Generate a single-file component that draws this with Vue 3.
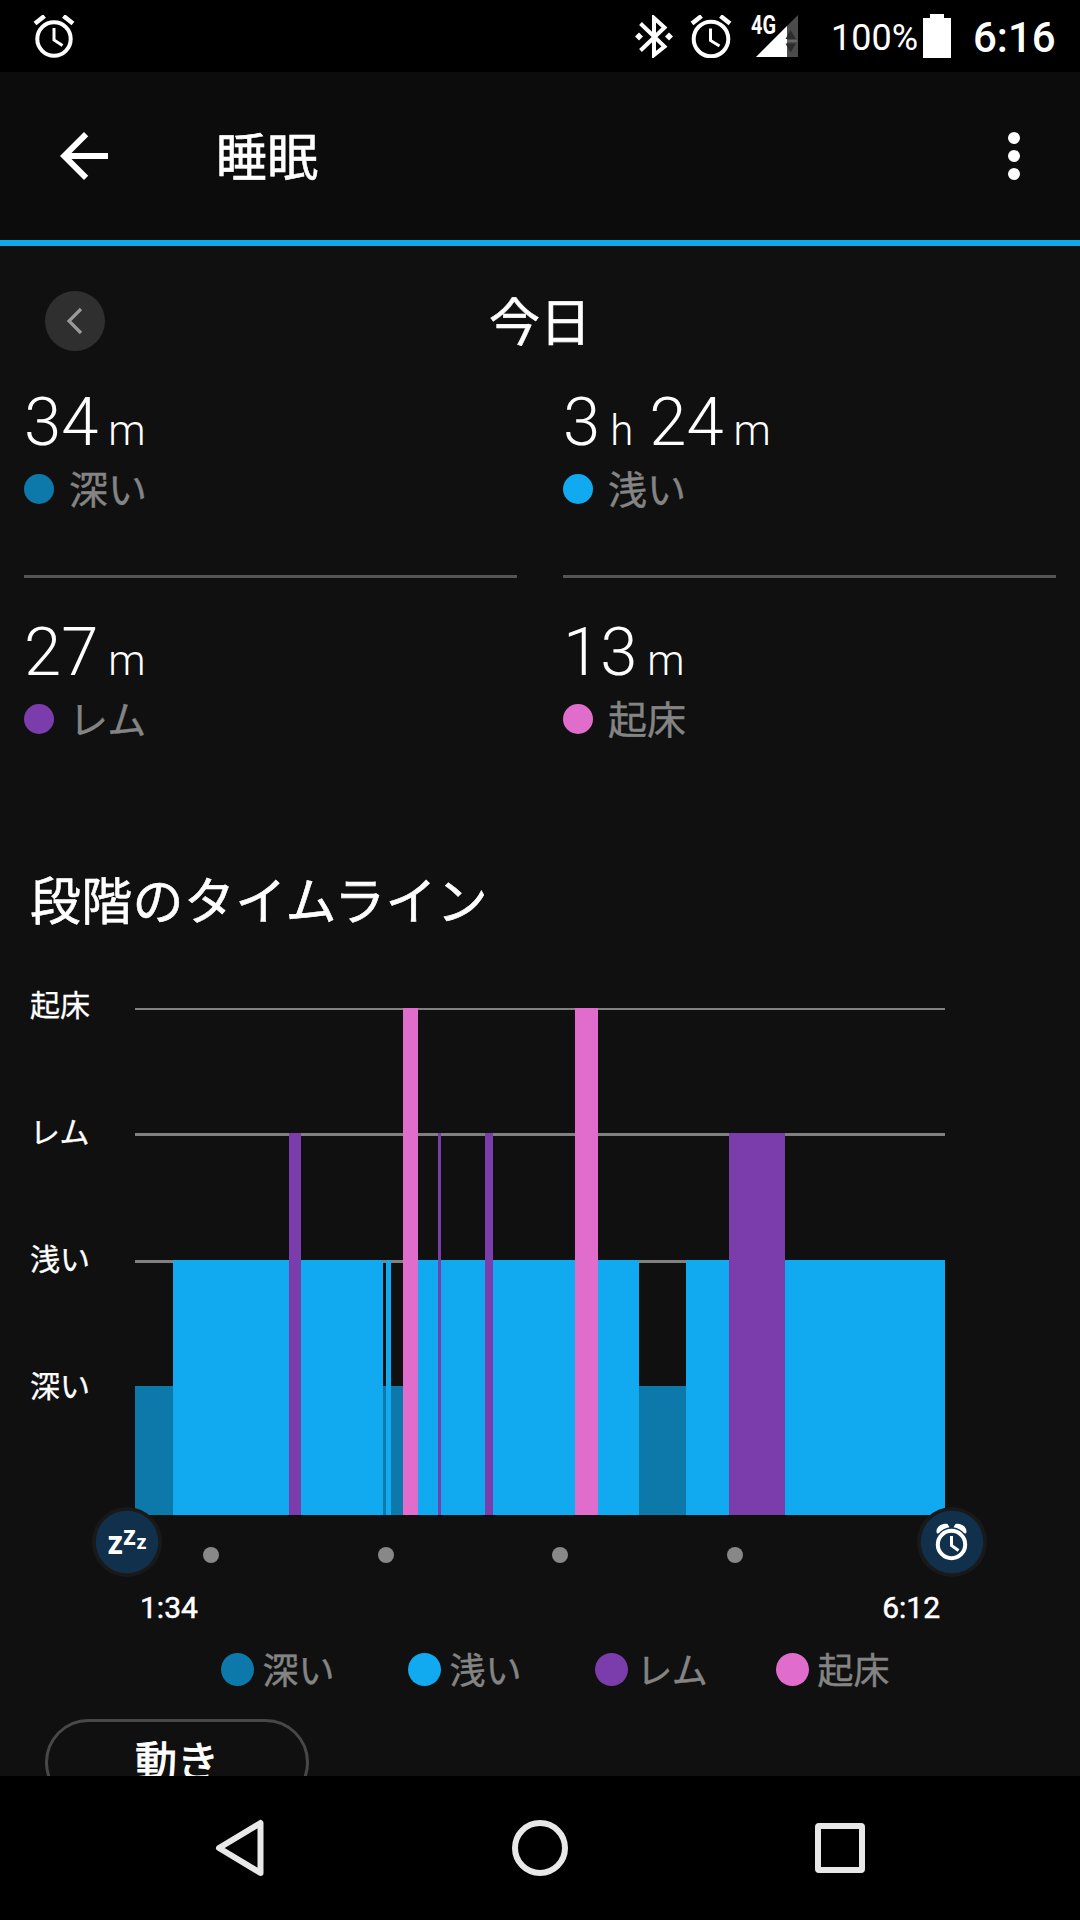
<script setup>
import { ref } from 'vue';

const stages = ref([
  { id: 'deep', name: '深い', time: [['34', 'm']] },
  { id: 'light', name: '浅い', time: [['3', 'h'], ['24', 'm']] },
  { id: 'rem', name: 'レム', time: [['27', 'm']] },
  { id: 'awake', name: '起床', time: [['13', 'm']] },
]);

const axis = ['起床', 'レム', '浅い', '深い'];

// [stage, width on the timeline]
const segments = [
  ['deep', 38],
  ['light', 116],
  ['rem', 12],
  ['light', 82],
  ['deep', 3],
  ['light', 5],
  ['deep', 12],
  ['awake', 15],
  ['light', 20],
  ['rem', 3],
  ['light', 44],
  ['rem', 8],
  ['light', 82],
  ['awake', 23],
  ['light', 41],
  ['deep', 47],
  ['light', 43],
  ['rem', 56],
  ['light', 160],
];
</script>

<template>
  <div class="phone">
    <div class="status">
      <svg class="alarm" width="42" height="43" viewBox="0 0 42 43">
        <circle cx="21" cy="24" r="16.7" />
        <path d="M21 13v12l8.500 5.500" class="hand" />
        <path d="M2 8.500l9.500-7.500M40 8.500l-9.500-7.500" class="bell" />
      </svg>
      <div class="status-right">
        <svg class="bt" width="38" height="43" viewBox="0 0 38 43">
          <path d="M5.500 8.500l24 23L19 40V3l10.500 9.500-24 23" />
          <path d="M0 21.500l4-4 4 4-4 4zM30 21.500l4-4 4 4-4 4z" class="dot" />
        </svg>
        <svg class="alarm second" width="42" height="43" viewBox="0 0 42 43">
          <circle cx="21" cy="24" r="17.300" />
          <path d="M20.500 13.500v12l9 5.500" class="hand" />
          <path d="M2 8.500l9.500-7.500M40 8.500l-9.500-7.500" class="bell" />
        </svg>
        <svg class="signal" width="48" height="43" viewBox="0 0 48 43">
          <path d="M5 42L47 0v42z" fill="#4b4b4b" />
          <path d="M5 42L36 11v31z" fill="#fff" />
          <path d="M34.500 24l5-9 5.500 9zM34.500 28.500H45l-5.500 9z" fill="#2c2c2c" />
          <path d="M36 26h10" stroke="#666" stroke-width="2" />
          <text x="0" y="19" textLength="25" lengthAdjust="spacingAndGlyphs">4G</text>
        </svg>
        <span class="percent">100%</span>
        <svg class="battery" width="28" height="44" viewBox="0 0 28 44">
          <path d="M7 0h14v4h7v40H0V4h7z" fill="#fff" />
        </svg>
        <span class="clock">6:16</span>
      </div>
    </div>

    <div class="header">
      <svg class="back" width="72" height="72" viewBox="0 0 24 24">
        <path d="M20 11H7.830l5.590-5.590L12 4l-8 8 8 8 1.410-1.410L7.830 13H20v-2z" fill="#fff" />
      </svg>
      <h1>睡眠</h1>
      <svg class="more" width="12" height="48" viewBox="0 0 12 48" fill="#fff">
        <circle cx="6" cy="6" r="6" />
        <circle cx="6" cy="24" r="6" />
        <circle cx="6" cy="42" r="6" />
      </svg>
    </div>

    <div class="content">
      <div class="day">
        <button class="prev">
          <svg width="60" height="60" viewBox="0 0 60 60">
            <path d="M36 18L24 30l12 12" fill="none" stroke="#999" stroke-width="3.200" />
          </svg>
        </button>
        <h2>今日</h2>
      </div>

      <div class="stats">
        <div v-for="stage in stages" :key="stage.id" class="stat">
          <div class="time">
            <span v-for="part in stage.time" :key="part[1]" class="part">
              <span class="num">{{ part[0] }}</span><span class="unit">{{ part[1] }}</span>
            </span>
          </div>
          <div class="name"><i :class="stage.id"></i><span>{{ stage.name }}</span></div>
        </div>
      </div>

      <h3>段階のタイムライン</h3>

      <div class="chart">
        <div class="labels">
          <span v-for="label in axis" :key="label">{{ label }}</span>
        </div>
        <div class="plot">
          <div class="grid">
            <div v-for="label in axis" :key="label"></div>
          </div>
          <div class="bars">
            <div v-for="(seg, i) in segments" :key="i" :class="seg[0]" :style="{ width: seg[1] + 'px' }"></div>
          </div>
          <svg class="badge start" width="70" height="70" viewBox="0 0 70 70">
            <circle cx="35" cy="35" r="35" fill="#191919" />
            <circle cx="35" cy="35" r="31.300" fill="#11304b" />
            <text x="15.500" y="47" font-size="34" textLength="15.500" lengthAdjust="spacingAndGlyphs">z</text>
            <text x="31" y="38" font-size="28" textLength="13" lengthAdjust="spacingAndGlyphs">z</text>
            <text x="44.500" y="42" font-size="21" textLength="10" lengthAdjust="spacingAndGlyphs">z</text>
          </svg>
          <svg class="badge end" width="70" height="70" viewBox="0 0 70 70">
            <circle cx="35" cy="35" r="35" fill="#191919" />
            <circle cx="35" cy="35" r="31.300" fill="#11304b" />
            <g fill="none" stroke="#fff">
              <circle cx="34.500" cy="37.500" r="13.700" stroke-width="4" />
              <path d="M34.500 29v9.500l7 5" stroke-width="3" />
            </g>
            <path d="M20 26.500c-2.500-5 4.500-11.500 10.500-9.500l2 3.200c-4 .6-8 2.600-10.700 6zM49 26.500c2.500-5-4.500-11.500-10.500-9.500l-2 3.200c4 .6 8 2.600 10.700 6z" fill="#fff" />
          </svg>
        </div>
      </div>

      <div class="ticks"><i v-for="n in 4" :key="n"></i></div>
      <div class="range"><span>1:34</span><span>6:12</span></div>

      <div class="legend">
        <div v-for="stage in stages" :key="stage.id" :class="['item', 'item-' + stage.id]">
          <i :class="stage.id"></i><span>{{ stage.name }}</span>
        </div>
      </div>

      <button class="movement">動き</button>
    </div>

    <div class="nav">
      <svg width="56" height="62" viewBox="0 0 56 62">
        <path d="M48.500 6v50L7 31z" />
      </svg>
      <svg width="56" height="62" viewBox="0 0 56 62">
        <circle cx="28" cy="31" r="25" />
      </svg>
      <svg width="56" height="62" viewBox="0 0 56 62">
        <rect x="6" y="9" width="44" height="44" rx="1" />
      </svg>
    </div>
  </div>
</template>

<style>
body {
  margin: 0;
  background: #000;
}
</style>

<style scoped>
.phone {
  width: 1080px;
  height: 1920px;
  display: flex;
  flex-direction: column;
  overflow: hidden;
  background: #101010;
  color: #fff;
  font-family: Roboto, "Noto Sans CJK JP", sans-serif;
}

h1,
h2,
h3 {
  margin: 0;
  font-size: 51px;
  font-weight: 400;
  line-height: 60px;
  -webkit-text-stroke: 0.6px currentColor;
}

i {
  display: block;
  border-radius: 50%;
}

.deep {
  background: #0d79aa;
}

.light {
  background: #11a9ef;
}

.rem {
  background: #7a3dab;
}

.awake {
  background: #e06dcc;
}

/* status bar */
.status {
  flex: none;
  box-sizing: border-box;
  height: 72px;
  padding: 0 26px 0 33px;
  display: flex;
  align-items: center;
  justify-content: space-between;
  background: #000;
}

.status-right {
  display: flex;
  align-items: center;
}

.alarm {
  fill: none;
  stroke: #fff;
  stroke-width: 4;
}

.alarm .hand {
  stroke-width: 3;
}

.alarm .bell {
  stroke-width: 4.5;
}

.second {
  margin-left: 17px;
}

.bt {
  fill: none;
  stroke: #fff;
  stroke-width: 4;
}

.bt .dot {
  fill: #fff;
  stroke: none;
}

.signal {
  margin-left: 19px;
  overflow: visible;
}

.signal text {
  fill: #fff;
  font-size: 26px;
  font-weight: 700;
}

.percent {
  width: 88px;
  margin-left: 32px;
  font-size: 36px;
  line-height: 44px;
  margin-top: 3px;
}

.battery {
  margin-left: 4px;
}

.clock {
  width: 81px;
  margin-left: 22px;
  font-size: 42px;
  font-weight: 500;
  line-height: 50px;
  margin-top: 4px;
}

/* header */
.header {
  flex: none;
  height: 168px;
  padding: 0 60px 0 48px;
  display: flex;
  align-items: center;
  background: #0c0c0c;
  border-bottom: 6px solid #11a9e6;
}

.header h1 {
  flex: 1;
  margin-left: 96px;
  padding-top: 6px;
}

.content {
  flex: 1;
  min-height: 0;
  overflow: hidden;
}

.day {
  height: 60px;
  padding: 45px 45px 0;
  display: grid;
  grid-template-columns: 60px 1fr 60px;
  text-align: center;
}

.day h2 {
  padding-top: 3px;
}

.prev {
  width: 60px;
  height: 60px;
  padding: 0;
  border: 0;
  border-radius: 50%;
  background: #2f2f2f;
}

.prev svg {
  display: block;
}

/* totals */
.stats {
  display: grid;
  grid-template-columns: 493px 493px;
  column-gap: 46px;
  padding: 34px 24px 0;
}

.stat {
  box-sizing: border-box;
  height: 230px;
}

.stat:nth-child(-n + 2) {
  background: linear-gradient(#555, #555) 0 190px / 100% 3px no-repeat;
}

.time {
  height: 80px;
  display: flex;
  line-height: 75px;
  font-weight: 300;
}

.part {
  display: flex;
  align-items: baseline;
  margin-right: 16px;
}

.num {
  font-size: 67px;
}

.unit {
  margin-left: 10px;
  font-size: 42px;
}

.name {
  display: flex;
  align-items: center;
  height: 48px;
  color: #848484;
  font-size: 39px;
  line-height: 48px;
  -webkit-text-stroke: 0.4px currentColor;
}

.name span {
  padding-top: 4px;
}

.name i {
  width: 30px;
  height: 30px;
  margin-right: 15px;
}

h3 {
  margin-top: 28px;
  padding-left: 30px;
  letter-spacing: 0.3px;
}

/* timeline */
.chart {
  display: flex;
  margin-top: 75px;
}

.labels {
  width: 105px;
  margin-top: -20px;
  padding-left: 30px;
}

.labels span {
  display: block;
  height: 127px;
  font-size: 30px;
  line-height: 36px;
  -webkit-text-stroke: 0.3px currentColor;
}

.plot {
  position: relative;
  width: 810px;
  height: 507px;
}

.grid {
  position: absolute;
  inset: 0;
}

.grid div {
  box-sizing: border-box;
  height: 126px;
  border-top: 3px solid #808080;
}

.grid div:first-child {
  height: 125px;
  border-top-width: 2px;
}

.grid div:nth-child(2) {
  height: 127px;
}

.bars {
  position: relative;
  height: 100%;
  display: flex;
  align-items: flex-end;
}

.bars .deep {
  height: 129px;
}

.bars .light {
  height: 255px;
}

.bars .rem {
  height: 382px;
}

.bars .awake {
  height: 507px;
}

.badge {
  position: absolute;
  bottom: -62px;
}

.badge text {
  fill: #fff;
  font-weight: 700;
}

.start {
  left: -43px;
}

.end {
  right: -42px;
}

.ticks {
  display: flex;
  gap: 158.700px;
  margin-top: 32px;
  padding-left: 203px;
}

.ticks i {
  width: 16px;
  height: 16px;
  background: #888;
}

.range {
  display: flex;
  justify-content: space-between;
  margin-top: 27px;
  padding: 0 140px 0 140px;
  font-size: 30px;
  font-weight: 400;
  line-height: 36px;
  -webkit-text-stroke: 0.5px currentColor;
}

.legend {
  display: flex;
  margin-top: 19px;
  padding-left: 220.500px;
}

.item {
  display: flex;
  align-items: center;
  width: 187px;
  height: 48px;
  color: #848484;
  font-size: 36px;
  line-height: 48px;
  -webkit-text-stroke: 0.4px currentColor;
}

.item span {
  padding-top: 5px;
}

.item i {
  width: 33px;
  height: 33px;
  margin-right: 9px;
}

.item-rem {
  width: 181px;
}

.movement {
  display: block;
  box-sizing: border-box;
  width: 264px;
  height: 87px;
  margin: 26px 0 0 45px;
  padding: 0;
  border: 3px solid #484848;
  border-radius: 44px;
  background: none;
  color: #fff;
  font-family: inherit;
  font-size: 42px;
  font-weight: 400;
  line-height: 82px;
  -webkit-text-stroke: 1px currentColor;
}

/* system navigation */
.nav {
  flex: none;
  height: 144px;
  display: flex;
  align-items: center;
  justify-content: center;
  gap: 244px;
  background: #000;
}

.nav svg {
  fill: none;
  stroke: #e8e8e8;
  stroke-width: 6;
  stroke-linejoin: round;
}
</style>
